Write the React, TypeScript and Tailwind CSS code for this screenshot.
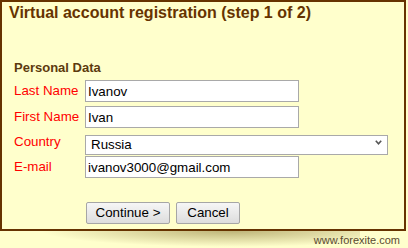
import React, { useState } from 'react';

const font = { fontFamily: '"Liberation Sans", Arial, sans-serif' };

const App: React.FC = () => {
  const [lastName, setLastName] = useState('Ivanov');
  const [firstName, setFirstName] = useState('Ivan');
  const [country, setCountry] = useState('Russia');
  const [email, setEmail] = useState('ivanov3000@gmail.com');

  const inputClass =
    'h-[22px] w-[214px] border border-[#a9a9a9] bg-white pl-[2px] text-[13.33px] leading-[16px] text-black outline-none';

  return (
    <div className="h-[248px] w-[408px] overflow-hidden bg-[#ffffcc]" style={font}>
      <div className="relative z-10 h-[231px] w-[406px] border-2 border-[#663300] bg-[#ffffcc]">
        <h1 className="pl-[7px] pt-[3px] text-[16px] font-bold leading-[16px] text-[#663300]">
          Virtual account registration (step 1 of 2)
        </h1>

        <div className="pl-[12px] pt-[39px]">
          <h2 className="text-[13px] font-bold leading-[16px] text-[#5c3a0e]">Personal Data</h2>

          <div className="mt-[4px] grid grid-cols-[71px_auto] items-center gap-y-[4px]">
            <label className="text-[13.33px] leading-[16px] text-[#ff0000]">Last Name</label>
            <input className={inputClass} value={lastName} onChange={(e) => setLastName(e.target.value)} />

            <label className="text-[13.33px] leading-[16px] text-[#ff0000]">First Name</label>
            <input className={inputClass} value={firstName} onChange={(e) => setFirstName(e.target.value)} />

            <label className="text-[13.33px] leading-[16px] text-[#ff0000]">Country</label>
            <div className="relative h-[20px] w-[303px]">
              <select
                className="h-[20px] w-[303px] appearance-none border border-[#a9a9a9] bg-white pl-[5px] text-[13.33px] leading-[16px] text-black outline-none"
                value={country}
                onChange={(e) => setCountry(e.target.value)}
              >
                <option>Russia</option>
                <option>Ukraine</option>
                <option>Belarus</option>
                <option>Kazakhstan</option>
              </select>
              <svg
                className="pointer-events-none absolute right-[6px] top-[8px]"
                width="7"
                height="5"
                viewBox="0 0 7 5"
              >
                <path d="M0.8 0.8 L3.5 3.8 L6.2 0.8" fill="none" stroke="#555" strokeWidth="1.6" />
              </svg>
            </div>

            <label className="text-[13.33px] leading-[16px] text-[#ff0000]">E-mail</label>
            <input className={inputClass} value={email} onChange={(e) => setEmail(e.target.value)} />
          </div>

          <div className="ml-[72px] mt-[24px] flex gap-[6px]">
            <button className="h-[22px] w-[84px] rounded-[2px] border border-[#a6a6a6] bg-gradient-to-b from-[#f6f6f6] to-[#dddddd] text-[13.33px] leading-[16px] text-black">
              Continue &gt;
            </button>
            <button className="h-[22px] w-[64px] rounded-[2px] border border-[#a6a6a6] bg-gradient-to-b from-[#f6f6f6] to-[#dddddd] text-[13.33px] leading-[16px] text-black">
              Cancel
            </button>
          </div>
        </div>
      </div>

      <div className="relative">
        <div className="absolute left-[40px] top-0 h-[16px] w-[320px] bg-[radial-gradient(ellipse_at_60%_0%,rgba(110,90,20,0.45),rgba(110,90,20,0)_70%)]" />
        <div className="relative pr-[8px] pt-[3px] text-right text-[11px] leading-[12px] text-[#5a4a30]">
          www.forexite.com
        </div>
      </div>
    </div>
  );
};

export default App;
